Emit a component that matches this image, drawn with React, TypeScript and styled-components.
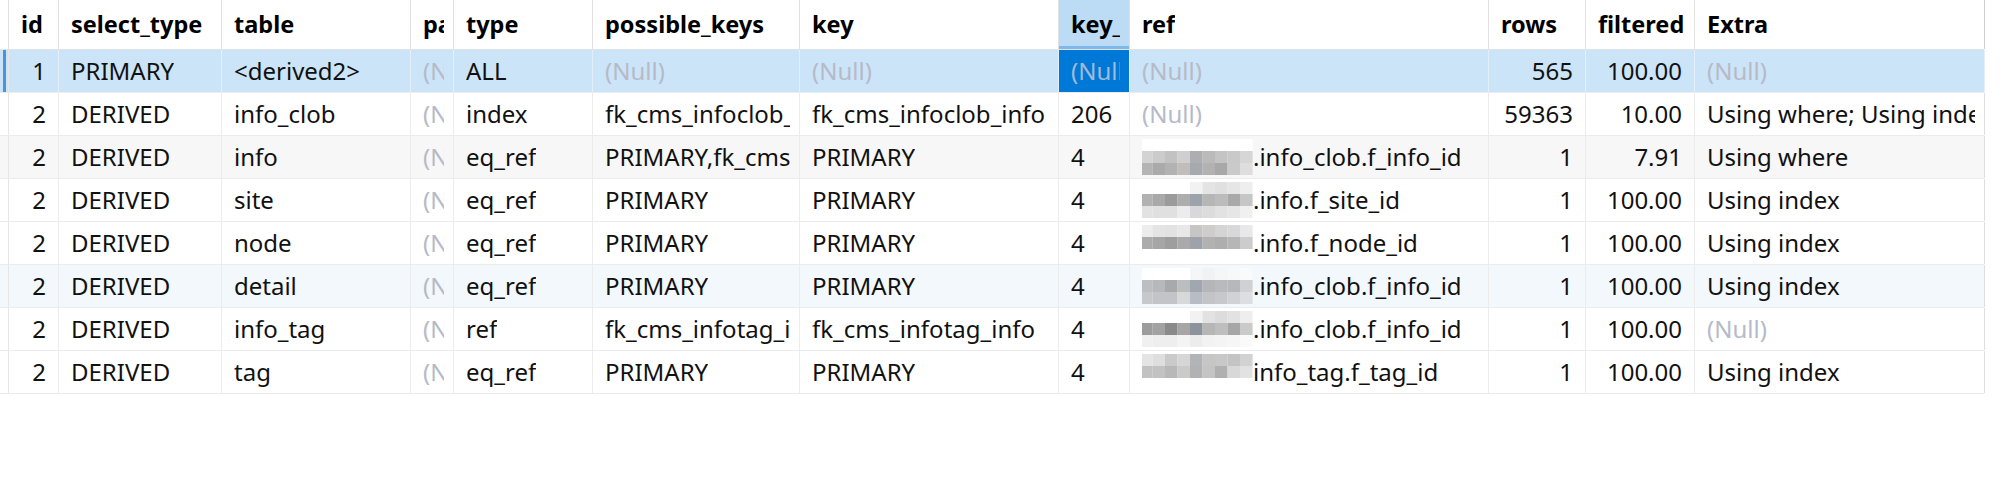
import React from "react";
import styled, { createGlobalStyle, css } from "styled-components";

const Global = createGlobalStyle`
  html, body { margin: 0; padding: 0; background: #ffffff; }
  body { font-family: "Noto Sans", "Open Sans", sans-serif; }
`;

const COLS = "9px 50px 163px 189px 43px 139px 207px 259px 71px 359px 97px 109px 290px";

const Grid = styled.div`
  display: flex;
  flex-direction: column;
  width: 1984px;
  font-family: "Noto Sans", "Open Sans", sans-serif;
  font-size: 24px;
  color: #111111;
`;

const HeaderRow = styled.div`
  display: grid;
  grid-template-columns: ${COLS};
  height: 50px;
  box-sizing: border-box;
  border-bottom: 1px solid #e3e3e3;
  background: #ffffff;
`;

const Row = styled.div<{ $bg: string }>`
  display: grid;
  grid-template-columns: ${COLS};
  height: 43px;
  box-sizing: border-box;
  border-bottom: 1px solid #ececec;
  background: ${(p) => p.$bg};
`;

const HeadCell = styled.div<{ $active?: boolean; $last?: boolean }>`
  box-sizing: border-box;
  display: flex;
  align-items: center;
  min-width: 0;
  padding: 0 9px 2px 12px;
  font-weight: 700;
  font-size: 23.5px;
  white-space: nowrap;
  overflow: hidden;
  border-right: 1px solid ${(p) => (p.$last ? "#cfcfcf" : "#e1e1e1")};
  color: #000;
  ${(p) =>
    p.$active &&
    css`
      background: #bcdbf4;
      box-shadow: inset 0 -3px 0 #7fb8ea;
    `}
`;

const Gutter = styled.div<{ $sel?: boolean; $head?: boolean }>`
  box-sizing: border-box;
  border-right: 1px solid ${(p) => (p.$head ? "#e1e1e1" : "#e6e6e6")};
  ${(p) =>
    p.$sel &&
    css`
      box-shadow: inset -2px 0 0 #cce4f7, inset -5px 0 0 #4a94dc;
    `}
`;

const Cell = styled.div<{
  $align?: "left" | "right";
  $null?: boolean;
  $focus?: boolean;
  $sel?: boolean;
  $last?: boolean;
}>`
  box-sizing: border-box;
  display: flex;
  align-items: center;
  min-width: 0;
  justify-content: ${(p) => (p.$align === "right" ? "flex-end" : "flex-start")};
  padding: 0 ${(p) => (p.$align === "right" ? "12px" : "9px")} 1px 12px;
  white-space: nowrap;
  overflow: hidden;
  border-right: 1px solid ${(p) => (p.$sel ? "#e4eef8" : p.$last ? "#dedede" : "#ececec")};
  color: ${(p) => (p.$null ? "#b6bac8" : "#111111")};
  ${(p) =>
    p.$focus &&
    css`
      background: #0078d7;
      color: #a3bad6;
    `}
`;

const Text = styled.span`
  display: flex;
  align-items: center;
  min-width: 0;
  overflow: hidden;
  white-space: nowrap;
`;

const MosaicSvg = styled.svg`
  flex: none;
  margin-left: -2px;
  display: block;
`;

type Mosaic = string[][];

const Blur: React.FC<{ m: Mosaic }> = ({ m }) => (
  <MosaicSvg width={113} height={36} viewBox="0 0 113 36">
    {m.map((row, r) =>
      row.map((c, i) => (
        <rect key={`${r}-${i}`} x={i * 12.5} y={r * 12} width={12.6} height={12.2} fill={`#${c}`} />
      ))
    )}
  </MosaicSvg>
);

const M3: Mosaic = [
  ["ffffff", "ffffff", "ffffff", "ffffff", "ffffff", "ffffff", "ffffff", "ffffff", "ffffff"],
  ["d3d3d3", "cbcbcb", "c2c2c2", "cfcfcf", "acaeb2", "bababa", "c4c4c4", "c9c9cc", "d6d6d6"],
  ["b4b4b4", "aaaaaa", "b2b2b2", "c0bdbb", "a6a9ae", "b2b2b2", "a8a8a8", "cacaca", "dedede"],
];
const M4: Mosaic = [
  ["ffffff", "ffffff", "ffffff", "ffffff", "f2f2f2", "e4e4e4", "e0e0e0", "e6e6e6", "eeeeee"],
  ["b2b2b2", "a9a9a9", "9b9b9b", "adadad", "9ea3ab", "b6b6b6", "bcbcbc", "a9a9a9", "c6c6c6"],
  ["e2e2e2", "e0e0e0", "e0e0e0", "ececec", "d6d8dc", "dcdcdc", "e2e2e2", "e6e6e6", "f0f0f0"],
];
const M5: Mosaic = [
  ["ececec", "e4e4e4", "e2e2e2", "e8e8e8", "c6c6c6", "cfcdcb", "d4d4d4", "d8d8da", "e8e8e8"],
  ["ababab", "a6a6a6", "9e9e9e", "aaaaaa", "9ea2aa", "b2b2b2", "aeaeae", "b6b6b6", "cccccc"],
  ["ffffff", "ffffff", "ffffff", "ffffff", "ffffff", "ffffff", "ffffff", "ffffff", "ffffff"],
];
const M6: Mosaic = [
  ["ffffff", "ffffff", "ffffff", "ffffff", "f4f6f8", "f0f2f4", "f4f6f8", "f6f8fa", "f8fafc"],
  ["bcbec2", "b6b8ba", "a8a9aa", "bcbdbf", "a1a7b0", "b4b6ba", "b8babd", "b6b8bc", "cfd1d4"],
  ["c6c8cc", "c2c4c8", "c2c4c8", "d6d8da", "b8bcc4", "c2c4c8", "c6c8cc", "d0d2d6", "dcdee2"],
];
const M7: Mosaic = [
  ["ffffff", "ffffff", "ffffff", "ffffff", "f2f2f2", "e2e2e2", "dcdcdc", "e2e2e2", "eeeeee"],
  ["9c9c9c", "a2a2a2", "8a8a8a", "a8a6a4", "8c939c", "b6b6b6", "bebebe", "a6a6a6", "cacaca"],
  ["f0f0f0", "eeeeee", "eeeeee", "f4f4f4", "ececec", "f2f2f2", "f4f4f4", "f6f6f6", "fafafa"],
];
const M8: Mosaic = [
  ["e4e4e4", "dedede", "cacaca", "d6d6d6", "b2b4b8", "c6c6c6", "c8c8c8", "c4c4c4", "d2d2d2"],
  ["c2c2c2", "c2c2c2", "b8b8b8", "cccac8", "b0b2b6", "c4c4c4", "b0b0b0", "d8d8d8", "e2e2e2"],
  ["ffffff", "ffffff", "ffffff", "ffffff", "ffffff", "ffffff", "ffffff", "ffffff", "ffffff"],
];

type Val = string | null;
interface RowData {
  id: string;
  selectType: string;
  table: string;
  type: string;
  possibleKeys: Val;
  key: Val;
  keyLen: Val;
  refBlur?: Mosaic;
  ref: Val;
  rows: string;
  filtered: string;
  extra: Val;
  bg: string;
  selected?: boolean;
}

const data: RowData[] = [
  { id: "1", selectType: "PRIMARY", table: "<derived2>", type: "ALL", possibleKeys: null, key: null, keyLen: null, ref: null, rows: "565", filtered: "100.00", extra: null, bg: "#cce4f7", selected: true },
  { id: "2", selectType: "DERIVED", table: "info_clob", type: "index", possibleKeys: "fk_cms_infoclob_info", key: "fk_cms_infoclob_info", keyLen: "206", ref: null, rows: "59363", filtered: "10.00", extra: "Using where; Using index", bg: "#ffffff" },
  { id: "2", selectType: "DERIVED", table: "info", type: "eq_ref", possibleKeys: "PRIMARY,fk_cms_infoclob_info", key: "PRIMARY", keyLen: "4", refBlur: M3, ref: ".info_clob.f_info_id", rows: "1", filtered: "7.91", extra: "Using where", bg: "#f7f7f7" },
  { id: "2", selectType: "DERIVED", table: "site", type: "eq_ref", possibleKeys: "PRIMARY", key: "PRIMARY", keyLen: "4", refBlur: M4, ref: ".info.f_site_id", rows: "1", filtered: "100.00", extra: "Using index", bg: "#ffffff" },
  { id: "2", selectType: "DERIVED", table: "node", type: "eq_ref", possibleKeys: "PRIMARY", key: "PRIMARY", keyLen: "4", refBlur: M5, ref: ".info.f_node_id", rows: "1", filtered: "100.00", extra: "Using index", bg: "#ffffff" },
  { id: "2", selectType: "DERIVED", table: "detail", type: "eq_ref", possibleKeys: "PRIMARY", key: "PRIMARY", keyLen: "4", refBlur: M6, ref: ".info_clob.f_info_id", rows: "1", filtered: "100.00", extra: "Using index", bg: "#f3f8fd" },
  { id: "2", selectType: "DERIVED", table: "info_tag", type: "ref", possibleKeys: "fk_cms_infotag_info", key: "fk_cms_infotag_info", keyLen: "4", refBlur: M7, ref: ".info_clob.f_info_id", rows: "1", filtered: "100.00", extra: null, bg: "#ffffff" },
  { id: "2", selectType: "DERIVED", table: "tag", type: "eq_ref", possibleKeys: "PRIMARY", key: "PRIMARY", keyLen: "4", refBlur: M8, ref: "info_tag.f_tag_id", rows: "1", filtered: "100.00", extra: "Using index", bg: "#ffffff" },
];

const headers = ["id", "select_type", "table", "partitions", "type", "possible_keys", "key", "key_len", "ref", "rows", "filtered", "Extra"];

const V: React.FC<{ v: Val; align?: "left" | "right"; focus?: boolean; sel?: boolean; last?: boolean }> = ({ v, align, focus, sel, last }) => (
  <Cell $align={align} $null={v === null} $focus={focus} $sel={sel} $last={last}>
    <Text>{v === null ? "(Null)" : v}</Text>
  </Cell>
);

export default function App() {
  return (
    <>
      <Global />
      <Grid>
        <HeaderRow>
          <Gutter $head />
          {headers.map((h, i) => (
            <HeadCell key={h} $active={h === "key_len"} $last={i === headers.length - 1}>
              <Text>{h}</Text>
            </HeadCell>
          ))}
        </HeaderRow>
        {data.map((r, idx) => (
          <Row key={idx} $bg={r.bg}>
            <Gutter $sel={r.selected} />
            <V v={r.id} align="right" sel={r.selected} />
            <V v={r.selectType} sel={r.selected} />
            <V v={r.table} sel={r.selected} />
            <V v={null} sel={r.selected} />
            <V v={r.type} sel={r.selected} />
            <V v={r.possibleKeys} sel={r.selected} />
            <V v={r.key} sel={r.selected} />
            <V v={r.keyLen} focus={r.selected} sel={r.selected} />
            <Cell $null={r.ref === null && !r.refBlur} $sel={r.selected}>
              <Text>
                {r.refBlur ? (
                  <>
                    <Blur m={r.refBlur} />
                    {r.ref}
                  </>
                ) : r.ref === null ? (
                  "(Null)"
                ) : (
                  r.ref
                )}
              </Text>
            </Cell>
            <V v={r.rows} align="right" sel={r.selected} />
            <V v={r.filtered} align="right" sel={r.selected} />
            <V v={r.extra} sel={r.selected} last />
          </Row>
        ))}
      </Grid>
    </>
  );
}
